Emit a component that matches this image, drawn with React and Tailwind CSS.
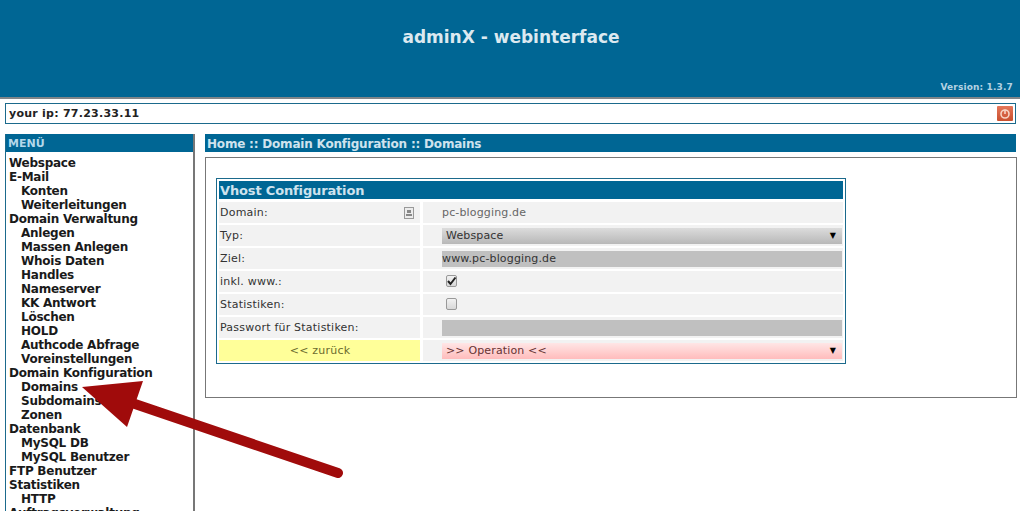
const FONT = 'font-["DejaVu_Sans",Verdana,sans-serif]'

const MENU = [
  ['Webspace', 0],
  ['E-Mail', 0],
  ['Konten', 1],
  ['Weiterleitungen', 1],
  ['Domain Verwaltung', 0],
  ['Anlegen', 1],
  ['Massen Anlegen', 1],
  ['Whois Daten', 1],
  ['Handles', 1],
  ['Nameserver', 1],
  ['KK Antwort', 1],
  ['Löschen', 1],
  ['HOLD', 1],
  ['Authcode Abfrage', 1],
  ['Voreinstellungen', 1],
  ['Domain Konfiguration', 0],
  ['Domains', 1],
  ['Subdomains', 1],
  ['Zonen', 1],
  ['Datenbank', 0],
  ['MySQL DB', 1],
  ['MySQL Benutzer', 1],
  ['FTP Benutzer', 0],
  ['Statistiken', 0],
  ['HTTP', 1],
  ['Auftragsverwaltung', 0],
]

function Row({ label, labelClass = 'bg-[#f2f2f2] text-[#333] pl-[1px]', extra, children }) {
  return (
    <div className="flex h-[21px] gap-[3px]">
      <div className={`w-[201px] flex items-center justify-between pt-[2px] pr-[4px] text-[11px] tracking-[0.22px] ${labelClass}`}>
        {label}
        {extra}
      </div>
      <div className="w-[420px] flex items-center bg-[#f2f2f2] pl-[19px] pr-[1px] text-[11px] tracking-[0.15px] text-[#555]">{children}</div>
    </div>
  )
}

function Dropdown({ value, className }) {
  return (
    <div className={`flex-1 h-[16px] flex items-center justify-between pt-[2px] pl-[4px] pr-[6px] text-[11px] tracking-[0.15px] text-[#333] ${className}`}>
      <span>{value}</span>
      <span className="-mt-[2px] text-[8px] leading-none text-black">▼</span>
    </div>
  )
}

function Checkbox({ checked }) {
  return (
    <span className="ml-[4px] -mt-[2px] w-[11px] h-[12px] rounded-[2px] border border-[#999] bg-gradient-to-b from-[#f2f2f2] to-[#d8d8d8] flex items-center justify-center">
      {checked && (
        <svg width="11" height="10" viewBox="0 0 11 10" className="shrink-0">
          <path d="M2 5 L4.5 8 L9.5 1.5" fill="none" stroke="#222" strokeWidth="2" />
        </svg>
      )}
    </span>
  )
}

export default function App() {
  return (
    <div className={`relative w-[1020px] h-[511px] overflow-hidden bg-white ${FONT}`}>
      <header className="relative h-[99px] bg-[#006694] border-b-2 border-[#7f8589] flex justify-center pt-[26px] pl-[2px]">
        <h1 className="text-[17px] leading-[22px] font-bold text-[#dce9f0]">adminX - webinterface</h1>
        <span className="absolute right-[7px] top-[81px] text-[9px] leading-[12px] tracking-[0.15px] font-bold text-[#b4d2e2]">Version: 1.3.7</span>
      </header>

      <div className="mx-[5px] mt-[4px] w-[1011px] h-[21px] border border-[#1b6a8c] flex items-center justify-between pl-[3px] pr-[2px]">
        <span className="pt-[2px] text-[11px] tracking-[0.25px] font-bold text-[#222]">your ip: 77.23.33.11</span>
        <svg width="16" height="15" viewBox="0 0 16 15" className="rounded-[1px]">
          <defs>
            <linearGradient id="powerFill" x1="0" y1="0" x2="0" y2="1">
              <stop offset="0" stopColor="#e4775a" />
              <stop offset="1" stopColor="#c9502f" />
            </linearGradient>
          </defs>
          <rect width="16" height="15" fill="url(#powerFill)" />
          <circle cx="8" cy="8" r="4" fill="none" stroke="#f7d4c4" strokeWidth="1.6" />
          <path d="M8 3.5 V8" stroke="#f7d4c4" strokeWidth="1.6" />
        </svg>
      </div>

      <div className="flex mt-[10px] ml-[5px] gap-[10px]">
        <aside className="w-[190px] h-[400px] border-l border-[#1b6a8c] border-r-2 border-r-[#777]">
          <div className="h-[18px] bg-[#006694] pl-[2px] pt-[1px] text-[11px] leading-[18px] font-bold text-[#b4d8ea]">MENÜ</div>
          <ul className="pt-[4px] text-[12px] leading-[14px] tracking-[-0.25px] font-bold text-[#1a1a1a]">
            {MENU.map(([name, level]) => (
              <li key={name} className={level ? 'pl-[15px]' : 'pl-[3px]'}>{name}</li>
            ))}
          </ul>
        </aside>

        <main className="w-[812px]">
          <div className="h-[18px] w-[811px] bg-[#006694] pl-[2px] pt-[1px] text-[12px] leading-[18px] tracking-[-0.2px] font-bold text-[#cfe3ee]">
            Home :: Domain Konfiguration :: Domains
          </div>
          <div className="mt-[5px] h-[241px] border border-[#777] pt-[20px] pl-[10px]">
            <div className="w-[630px] border border-[#1b6a8c] px-[2px] py-[2px]">
              <div className="h-[18px] bg-[#006694] pl-[1px] pt-[1px] text-[13px] leading-[18px] tracking-[-0.15px] font-bold text-[#cfe3ee]">Vhost Configuration</div>
              <div className="mt-[3px] flex flex-col gap-[2px]">
                <Row
                  label="Domain:"
                  extra={
                    <span className="-mt-[2px] w-[10px] h-[12px] mr-[2px] border border-[#999] bg-[#ececec] flex flex-col items-center justify-center gap-[1px]">
                      <span className="w-[4px] h-[3px] bg-[#888]" />
                      <span className="w-[6px] h-[2px] bg-[#888]" />
                    </span>
                  }
                >
                  <span className="pt-[2px] text-[#666]">pc-blogging.de</span>
                </Row>
                <Row label="Typ:">
                  <Dropdown value="Webspace" className="bg-gradient-to-b from-[#dcdcdc] to-[#b8b8b8]" />
                </Row>
                <Row label="Ziel:">
                  <div className="flex-1 h-[16px] bg-[#c0c0c0] text-[11px] leading-[16px] text-[#333]">www.pc-blogging.de</div>
                </Row>
                <Row label="inkl. www.:">
                  <Checkbox checked />
                </Row>
                <Row label="Statistiken:">
                  <Checkbox />
                </Row>
                <Row label="Passwort für Statistiken:">
                  <div className="flex-1 h-[16px] bg-[#c0c0c0]" />
                </Row>
                <Row
                  label={<span className="flex-1 text-center pl-[5px] text-[#6b6b2e]">&lt;&lt; zurück</span>}
                  labelClass="bg-[#ffff99]"
                >
                  <Dropdown value=">> Operation <<" className="bg-gradient-to-b from-[#ffe6e6] to-[#ffbcbc] text-[#633]" />
                </Row>
              </div>
            </div>
          </div>
        </main>
      </div>

      <svg className="absolute left-0 top-0 pointer-events-none" width="1020" height="511" viewBox="0 0 1020 511">
        <path d="M135 404 L338 473" stroke="#a00b0b" strokeWidth="10" strokeLinecap="round" fill="none" />
        <path d="M82 387 L143 381 L127 427 Z" fill="#a00b0b" />
      </svg>
    </div>
  )
}
